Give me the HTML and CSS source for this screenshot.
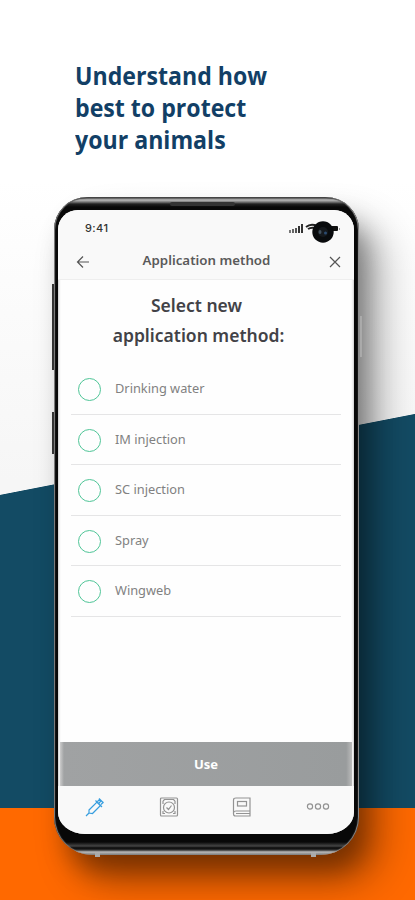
FILE: index.html
```
<!DOCTYPE html>
<html lang="en">
  <head>
    <meta charset="UTF-8" />
    <meta name="viewport" content="width=device-width, initial-scale=1.0" />
    <title>Application method</title>
    <link rel="stylesheet" href="styles.css">
  </head>
  <body>
    <div class="poster">
      <h1>Understand how<br />best to protect<br />your animals</h1>

      <div class="phone">
        <span class="side-button volume"></span>
        <span class="side-button bixby"></span>
        <span class="side-button power"></span>
        <span class="speaker"></span>
        <span class="foot foot-left"></span>
        <span class="foot foot-right"></span>

        <div class="screen">
          <div class="top">
            <div class="status-bar">
              <span class="time">9:41</span>
              <svg class="signals" width="56" height="24" viewBox="0 0 56 24">
                <rect x="3" y="11" width="2" height="3" fill="#777" />
                <rect x="6" y="10" width="2" height="4" fill="#666" />
                <rect x="9" y="9" width="2" height="5" fill="#555" />
                <rect x="12" y="7" width="2" height="7" fill="#333" />
                <rect x="15" y="5" width="2" height="9" fill="#333" />
                <path d="M20 8Q25 4 31 7M22 10Q25 8 29 9" fill="none" stroke="#222" stroke-width="2" />
                <rect x="43" y="7" width="9" height="5" rx="1" fill="#111" />
                <rect x="53" y="9" width="1" height="2" fill="#999" />
                <circle cx="37" cy="13" r="10.700" fill="#090b0d" />
                <circle cx="37" cy="13" r="5" fill="#15191d" />
                <ellipse cx="34" cy="13" rx="1.500" ry="2" fill="#42515d" />
                <circle cx="39.500" cy="14" r="1.500" fill="#2b4b70" />
              </svg>
            </div>
            <div class="nav-bar">
              <svg width="14" height="14" viewBox="0 0 14 14">
                <path d="M13 7H1.500M7 1.500L1.500 7L7 12.500" />
              </svg>
              <span class="title">Application method</span>
              <svg width="12" height="12" viewBox="0 0 12 12">
                <path d="M1 1L11 11M11 1L1 11" />
              </svg>
            </div>
          </div>

          <div class="content">
            <h2>Select new<br /><span>application method:</span></h2>
            <ul>
              <li><i></i><span>Drinking water</span></li>
              <li><i></i><span>IM injection</span></li>
              <li><i></i><span>SC injection</span></li>
              <li><i></i><span>Spray</span></li>
              <li><i></i><span>Wingweb</span></li>
            </ul>
          </div>

          <button class="use">Use</button>

          <div class="tabs">
            <svg class="active" width="20" height="20" viewBox="0 0 20 20">
              <path d="M1 19L4.500 15.500M4 13L12 5L15.500 8.500L7.500 16.500L4 16Z" />
              <path d="M10.500 3.500L17 10M14 6L16.500 3.500M14 1.500L18.500 6M12.500 4.500L15 2M16 7.500L18.500 5" />
            </svg>
            <svg width="20" height="20" viewBox="0 0 20 20">
              <rect x="1.500" y="1" width="17" height="18" rx="1" />
              <circle cx="10" cy="10.500" r="5.500" />
              <path d="M4 4L5.500 2.500H14.500L16 4M4 4V7M16 4V7M4 14V16.500H6M16 14V16.500H14M7.500 10.500L9.500 12.500L12.500 8.500" />
            </svg>
            <svg width="20" height="20" viewBox="0 0 20 20">
              <path d="M4 1H18V19H3.500Q1.500 19 1.500 17V3Q1.500 1 4 1ZM1.500 15.500Q2 14 4 14H18M4 16.500H18" />
              <rect x="5.500" y="4.500" width="9" height="4.500" />
            </svg>
            <svg width="24" height="20" viewBox="0 0 24 20">
              <circle cx="4" cy="9.500" r="2.600" />
              <circle cx="12" cy="9.500" r="2.600" />
              <circle cx="20" cy="9.500" r="2.600" />
            </svg>
          </div>
        </div>
      </div>
    </div>
  </body>
</html>
```

FILE: styles.css
```
* {
  margin: 0;
  padding: 0;
  box-sizing: border-box;
}

body {
  font-family: "Noto Sans", sans-serif;
}

.poster {
  width: 415px;
  height: 900px;
  padding-top: 59px;
  overflow: hidden;
  background:
    linear-gradient(#ff6900, #ff6900) 0 808px / 100% 92px no-repeat,
    linear-gradient(#134b64, #134b64) 0 495px / 100% 313px no-repeat,
    linear-gradient(to bottom right, transparent 49.7%, #134b64 50.2%) 0 414px / 100% 81px no-repeat,
    linear-gradient(#fff 180px, #f6f6f6 480px);
}

h1 {
  height: 138px;
  padding-left: 75px;
  font-family: "Open Sans", sans-serif;
  font-size: 25px;
  font-weight: 700;
  line-height: 32px;
  color: #123f66;
  transform: scaleX(0.925);
  transform-origin: 75px 0;
}

.phone {
  position: relative;
  width: 305px;
  height: 658px;
  margin-left: 54px;
  padding: 13px 5px 21px 4px;
  border-radius: 33px 33px 38px 38px;
  background: linear-gradient(#222 0, #bbb 3px, #777 5px, #222 7px, #080808 10px, #080808 645px, #444 649px, #080808 651px, #333 653px, #bbb 655px, #777 658px);
  box-shadow:
    inset 1px 0 1px #888,
    inset -1px 0 1px #999,
    inset 0 1px 1px #333,
    22px 28px 40px rgba(0, 0, 0, 0.3),
    10px 20px 26px -4px rgba(0, 0, 0, 0.35);
}

.side-button {
  position: absolute;
  width: 2px;
  background: #333;
}

.volume {
  left: -2px;
  top: 87px;
  height: 86px;
}

.bixby {
  left: -2px;
  top: 215px;
  height: 42px;
}

.power {
  right: -3px;
  top: 119px;
  height: 41px;
  background: #aaa;
}

.speaker {
  position: absolute;
  left: 116px;
  top: 5px;
  width: 65px;
  height: 4px;
  border-radius: 2px;
  background: #333;
}

.foot {
  position: absolute;
  bottom: -2px;
  width: 5px;
  height: 4px;
  background: #aaa;
}

.foot-left {
  left: 41px;
}

.foot-right {
  right: 43px;
}

.screen {
  display: flex;
  flex-direction: column;
  height: 624px;
  border-radius: 20px 20px 27px 27px / 20px 20px 22px 22px;
  overflow: hidden;
  background: #fefefe;
  box-shadow: inset 0 0 3px #999;
}

.top {
  height: 70px;
  background: #f9f9f9;
  border-bottom: 1px solid #eee;
}

.status-bar {
  display: flex;
  justify-content: space-between;
  height: 36px;
  padding: 9px 12px 0 27px;
}

.time {
  font-family: Inter, sans-serif;
  font-size: 11px;
  font-weight: 500;
  line-height: 18px;
  letter-spacing: 0.4px;
  color: #333;
}

.nav-bar {
  display: flex;
  align-items: center;
  justify-content: space-between;
  padding: 7px 13px 0 18px;
}

.nav-bar svg {
  position: relative;
  top: 1px;
  fill: none;
  stroke: #555;
  stroke-width: 1.2;
}

.title {
  padding-right: 6px;
  font-size: 13.3px;
  font-weight: 600;
  line-height: 15px;
  color: #5a5a5a;
}

.content {
  flex: 1;
  padding: 10px 13px 0 13px;
}

h2 {
  height: 74px;
  padding-right: 19px;
  text-align: center;
  font-size: 17.5px;
  font-weight: 600;
  line-height: 30px;
  color: #424247;
}

h2 span {
  padding-left: 4px;
}

ul {
  list-style-type: none;
}

li {
  display: flex;
  align-items: center;
  height: 50.5px;
  padding: 2px 0 0 7px;
  border-bottom: 1px solid #e5e5e6;
  font-size: 12.8px;
  color: #818181;
}

li i {
  width: 23px;
  height: 23px;
  margin-right: 14px;
  border: 1.5px solid #4fc597;
  border-radius: 50%;
}

li span {
  padding-bottom: 3px;
}

.use {
  flex: none;
  height: 44px;
  margin: 0 2px;
  border: none;
  background: linear-gradient(to right, #ccc, #a0a2a3 4px, #999c9d 98%, #bbb);
  font-family: "Noto Sans", sans-serif;
  font-size: 13px;
  font-weight: 700;
  color: #fff;
}

.tabs {
  display: flex;
  justify-content: space-between;
  height: 48px;
  padding: 11px 24px 0 27px;
  background: #f9f9f9;
}

.tabs svg {
  fill: none;
  stroke: #939393;
  stroke-width: 1.2;
}

.tabs .active {
  stroke: #379edf;
}
```
